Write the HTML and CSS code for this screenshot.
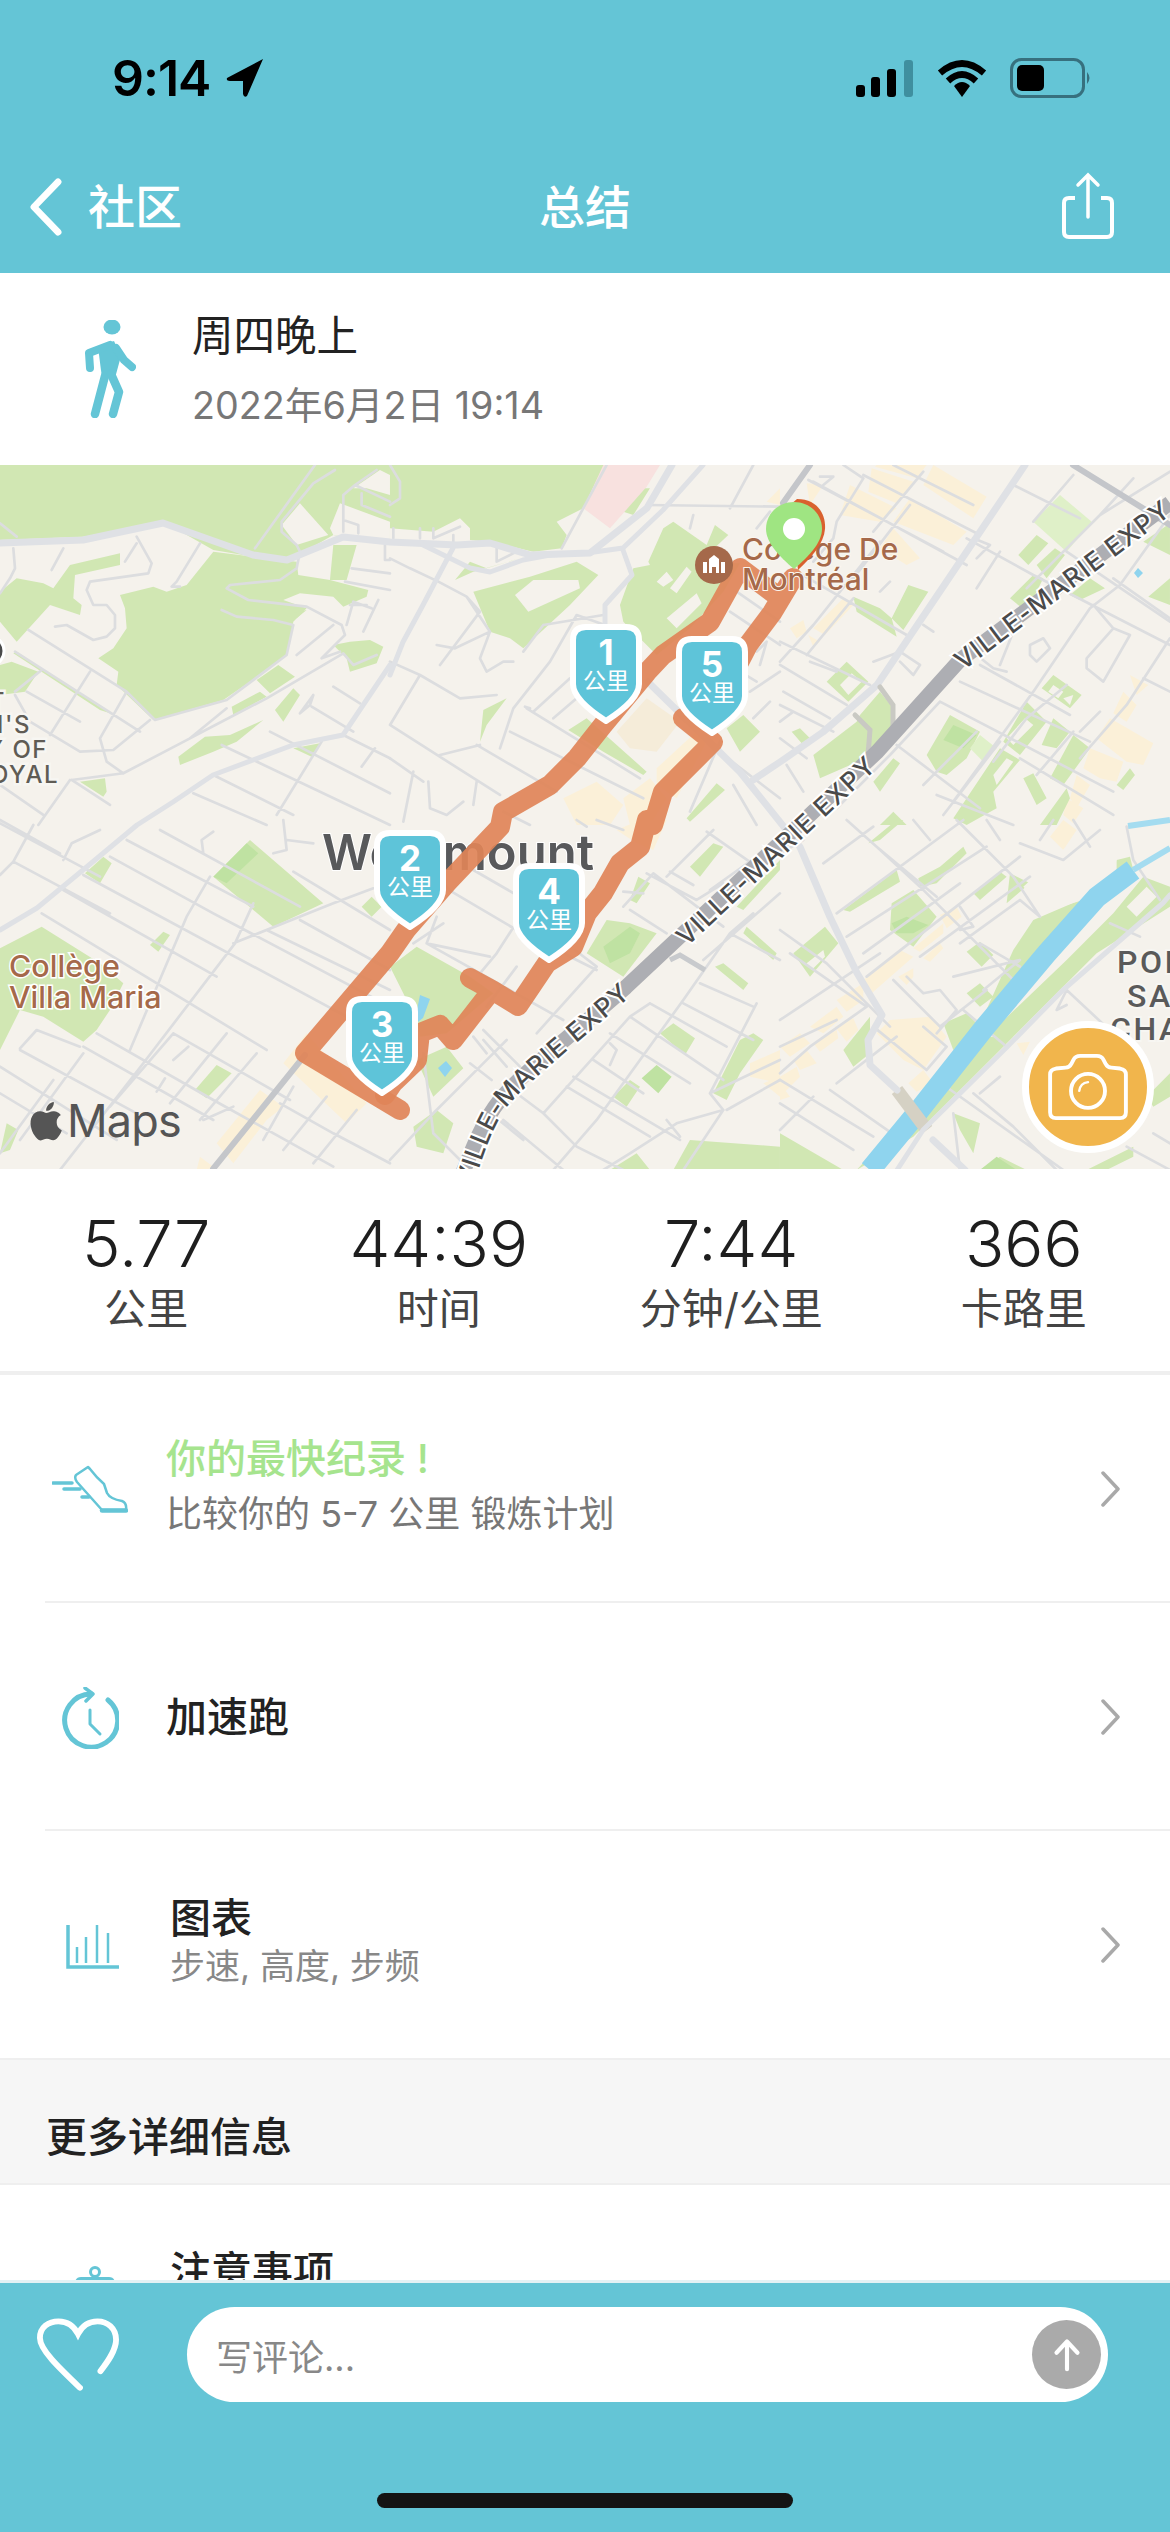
FILE: index.html
```html
<!DOCTYPE html>
<html lang="zh">
<head>
<meta charset="utf-8">
<title>总结</title>
<link rel="stylesheet" href="styles.css">
</head>
<body>
<div class="page">
  <header class="top">
    <div class="status">
      <div class="status-left">
        <span class="clock">9:14</span>
        <svg class="loc" viewBox="0 0 38 40"><path d="M37 1 L1 20 Q0 23 4 23 L17 23 L17 36 Q18 40 21 38 Z" fill="#000"/></svg>
      </div>
      <div class="status-right">
        <svg class="signal" viewBox="0 0 58 37"><rect x="0" y="25" width="9" height="12" rx="3" fill="#000"/><rect x="15" y="17" width="9" height="20" rx="3" fill="#000"/><rect x="31" y="9" width="9" height="28" rx="3" fill="#000"/><rect x="48" y="0" width="9" height="37" rx="3" fill="#3f8f9f"/></svg>
        <svg class="wifi" viewBox="0 0 50 37"><path d="M3 13 Q25 -6 47 13" fill="none" stroke="#000" stroke-width="6.5"/><path d="M11 21 Q25 8 39 21" fill="none" stroke="#000" stroke-width="6.5"/><path d="M17 26 Q25 18 33 26 L25 37 Z" fill="#000"/></svg>
        <svg class="battery" viewBox="0 0 84 40"><rect x="1.5" y="1.5" width="72" height="37" rx="10" fill="none" stroke="#37707e" stroke-width="3"/><rect x="7" y="7" width="27" height="26" rx="5" fill="#000"/><path d="M77 14 Q82 20 77 26 Z" fill="#37707e"/></svg>
      </div>
    </div>
    <nav class="nav">
      <div class="back">
        <svg class="back-icon" viewBox="0 0 36 60"><path d="M31 4 L6 30 L31 56" fill="none" stroke="#fff" stroke-width="7" stroke-linecap="round" stroke-linejoin="round"/></svg>
        <span>社区</span>
      </div>
      <div class="nav-title">总结</div>
      <svg class="share" viewBox="0 0 54 68"><path d="M14 26 H8 Q3 26 3 31 V60 Q3 65 8 65 H46 Q51 65 51 60 V31 Q51 26 46 26 H40" fill="none" stroke="#fff" stroke-width="4"/><path d="M27 45 V3 M17 13 L27 3 L37 13" fill="none" stroke="#fff" stroke-width="3.5" stroke-linecap="round"/></svg>
    </nav>
  </header>

  <main class="scroll">
    <section class="activity">
      <svg class="walker" viewBox="0 0 52 98"><ellipse cx="28" cy="7" rx="8.5" ry="7.5" fill="#64c5d6"/><path d="M14 27 L30 21 L37 36 L31 58 L18 58 Z" fill="#64c5d6"/><g fill="none" stroke="#64c5d6" stroke-linecap="round" stroke-linejoin="round"><path d="M26 25 L5 33 L6 48" stroke-width="8"/><path d="M32 28 L40 40 L48 47" stroke-width="8"/><path d="M21 56 L11 94" stroke-width="8.5"/><path d="M27 54 L35 72 L29 94" stroke-width="8.5"/></g></svg>
      <div class="activity-text">
        <div class="activity-title">周四晚上</div>
        <div class="activity-date">2022年6月2日 19:14</div>
      </div>
    </section>

    <section class="map">
      <svg class="map-art" viewBox="0 0 1170 704">
        <rect class="m-base" width="1170" height="704"/>

        <!-- commercial areas -->
        <g class="m-tan">
          <g transform="translate(390,0) scale(.3333)"><path class="m-tan-soft" d="M680,800 770,700 870,770 800,860 720,850Z"/><path d="M800,910 930,790 950,830 860,1000 800,960Z M520,1000 620,950 700,1020 660,1080 560,1080Z M700,1000 780,940 830,1000 780,1080 720,1080Z M1130,110 1170,70 1170,120Z"/></g>
          <g transform="translate(780,0) scale(.3333)"><path d="M275,10 400,50 350,115 265,80Z M290,0 440,0 410,40 285,5Z M460,0 620,95 580,160 430,60Z M390,100 560,200 520,240 340,170Z M80,55 130,60 90,120Z M210,60 350,130 300,170 180,150Z M340,190 420,280 380,300 300,250Z M30,490 70,465 80,500 50,520Z M100,490 190,400 220,420 135,510Z M85,510 120,530 100,545Z M1050,630 1105,660 1070,690Z M1030,680 1070,720 1040,770 1000,745Z M990,760 1120,835 1090,900 1040,890 950,820Z M930,850 1030,890 1010,950 960,940 910,910Z M890,930 930,960 890,1030 870,1000Z M860,1000 910,1030 880,1075 850,1050Z"/></g>
          <g transform="translate(0,355) scale(.3333)"><path d="M650,970 780,810 850,860 800,900 700,1030Z M850,730 920,640 1100,850 1040,910Z M600,1010 640,1040 620,1050 590,1050Z"/></g>
          <g transform="translate(390,355) scale(.3333)"><path d="M1080,730 1170,690 1170,790 1080,770Z M1120,790 1170,770 1170,830Z M600,0 640,0 620,15Z M680,30 750,0 830,0 790,90 740,70Z"/></g>
          <g transform="translate(780,355) scale(.3333)"><path d="M810,50 850,0 890,30 850,90Z M480,285 530,260 545,290 500,325Z M400,385 490,310 490,340 420,395Z M430,415 480,370 490,385 450,425Z M250,480 360,390 400,410 275,520Z M170,540 250,490 250,540 200,575Z M355,470 400,445 400,470 380,495Z M90,620 170,560 190,590 130,640Z M165,620 220,595 235,630 200,665Z M0,680 60,640 90,670 30,710Z M100,670 170,630 175,655 120,695Z M40,720 80,690 110,730 60,750Z M0,770 50,740 60,770 0,830Z M0,790 30,830 0,840Z M290,640 330,600 450,590 500,650 430,750 370,720Z M385,790 430,750 460,790 410,815Z M710,670 750,665 730,705Z"/></g>
        </g>

        <!-- parks -->
        <g class="m-green">
          <g transform="scale(.3333)">
            <path d="M0,0 1170,0 1170,240 1000,210 860,290 760,275 640,255 490,170 250,215 0,225Z"/>
            <path d="M360,390 460,365 500,380 560,360 640,260 760,275 890,290 895,330 990,345 1105,375 1100,395 1030,425 1000,395 900,385 850,405 920,430 880,470 860,570 830,595 670,705 460,765 350,660 355,620 295,580 340,550 380,490 375,430Z"/>
            <path d="M0,380 50,340 130,355 160,370 210,300 360,265 360,300 225,330 220,400 245,420 240,450 150,420 50,530 0,470Z"/>
            <path d="M0,600 35,590 115,620 75,680 0,690Z M770,645 835,600 885,635 810,685Z M695,725 780,680 800,695 700,750Z M825,735 880,670 900,690 850,770Z M535,875 615,815 690,810 790,765 710,830 640,860 540,900Z M240,950 315,940 320,980 310,995Z M880,850 960,835 935,875Z M1000,540 1050,530 1110,525 1150,545 1130,595 1050,620 1040,580Z M40,565 50,560 330,745 300,735Z M850,450 920,435 890,460Z"/>
            <path class="m-clear" d="M900,115 985,210 890,240 845,180Z M1020,115 1170,170 1170,240 1000,210 990,190Z M1060,70 1140,15 1170,30 1170,90 1100,70Z M920,310 985,340 1000,240 1070,240 1040,345 1170,360 1170,240 920,270Z"/>
            <path d="M1000,240 1070,240 1040,345 990,345Z"/>
          </g>
          <g transform="translate(390,0) scale(.3333)">
            <path d="M0,0 650,0 580,130 500,170 530,210 515,250 430,260 300,230 240,225 240,190 210,160 130,200 0,190Z"/>
            <path d="M250,380 420,335 560,290 625,330 540,420 400,550 360,520 300,500Z"/>
            <path class="m-clear" d="M375,390 430,345 500,345 565,345 570,370 415,440Z"/>
            <path d="M700,470 690,420 730,310 780,300 775,290 820,190 850,170 950,240 975,180 1015,210 930,290 1050,295 1000,380 900,490 800,570Z"/>
            <path class="m-clear" d="M800,350 830,320 850,345 820,365Z M840,370 890,305 905,320 860,385Z M830,460 920,385 935,415 860,490Z"/>
            <path d="M195,345 240,290 290,310 390,280 250,320Z M535,795 590,760 770,920 760,930 640,860Z M890,1060 980,955 1005,975 900,1070Z M1010,790 1060,750 1110,800 1050,860Z M270,830 280,735 350,700 290,780Z M740,70 780,70 730,150 700,140Z"/>
            <path class="m-pink" d="M640,0 810,0 770,65 660,190 580,130Z"/>
          </g>
          <g transform="translate(780,0) scale(.3333)">
            <path d="M220,395 300,430 335,460 350,515 230,440Z M335,460 385,360 445,380 370,495Z M140,650 200,590 265,650 205,710Z"/>
            <path class="m-clear" d="M180,660 215,625 245,650 205,690Z"/>
            <path class="m-green-pale" d="M760,170 840,90 935,170 860,260Z"/>
            <path d="M715,270 770,210 805,235 745,300Z M770,300 825,250 855,270 800,340Z M870,390 930,340 975,370 900,405Z M1090,230 1170,175 1170,270Z M1105,395 1170,340 1170,420Z M100,870 230,770 240,750 300,680 340,730 340,790 280,870 120,940Z M35,800 60,790 90,820 65,835Z M440,870 510,750 600,800 560,880 500,930 470,920Z M670,830 740,710 800,770 720,870Z M785,840 820,760 870,800 830,850Z M785,670 820,630 905,690 870,730Z M810,940 880,810 930,850 850,960Z M520,1060 660,850 720,885 640,980 650,1030 560,1080Z M730,940 760,925 800,1000 770,1020Z M780,1080 860,970 870,1000 830,1080Z M1010,960 1050,910 1065,930 1030,975Z M280,950 340,880 360,895 300,980Z M300,1080 340,1040 380,1080Z M70,1040 140,970 160,990 100,1060Z M690,400 760,330 790,340 740,440Z"/>
            <path class="m-clear" d="M820,660 850,680 835,700 805,680Z M850,700 880,690 870,720Z M680,820 735,760 760,780 700,840Z M640,930 680,880 700,890 650,960Z"/>
            <path class="m-green-mid" d="M490,825 520,780 590,810 550,850Z"/>
            <path class="m-green-pale" d="M570,850 600,810 650,850 610,890Z"/>
          </g>
          <g transform="translate(0,355) scale(.3333)">
            <path d="M0,385 125,320 300,430 370,490 330,570 290,630 250,665 130,590 60,570 0,690Z M640,170 750,60 970,250 820,320Z M450,375 490,335 510,345 475,395Z M255,160 310,110 335,130 300,190Z M585,810 650,735 695,760 620,835Z M1085,260 1115,230 1145,260 1115,290Z M0,1000 20,910 55,930 30,990Z"/>
            <path class="m-green-mid" d="M640,170 740,70 775,100 680,190Z"/>
          </g>
          <g transform="translate(390,355) scale(.3333)">
            <path d="M0,440 80,380 240,470 310,520 170,640 90,650 80,600Z M80,720 170,680 220,745 130,830Z M70,920 140,870 190,910 160,1000 80,980Z M590,400 650,300 720,310 800,340 700,470Z M900,140 970,70 1000,80 930,170Z M975,440 1000,430 1075,490 1060,510Z M810,640 850,610 915,655 885,705Z M670,830 720,780 750,800 710,860Z M970,820 1050,660 1090,640 1120,660 1050,760 1010,840Z M850,1050 900,960 1170,980 1170,1050Z M1040,260 1170,120 1170,150 1060,270Z M1070,320 1160,400 1150,420 1060,340Z M720,240 745,170 780,190 740,250Z M660,1050 740,1000 780,1050Z"/>
            <path class="m-green-mid" d="M640,380 720,320 750,340 720,400 660,430Z M755,775 800,735 845,770 805,820Z"/>
          </g>
          <g transform="translate(780,355) scale(.3333)">
            <path d="M610,590 700,390 760,300 900,240 1010,150 1060,140 910,320 620,610Z M630,640 860,420 1000,280 1090,170 1170,200 1170,260 950,400 680,670Z M230,1050 470,790 560,650 700,650 400,950Z M490,610 560,580 600,620 520,690Z M190,270 350,150 360,185 210,275Z M415,175 480,140 550,80 560,100 470,190 420,200Z M580,220 660,155 680,170 600,240Z M690,160 750,190 680,250Z M265,70 350,0 370,0 300,60Z M335,250 400,210 470,290 400,380 330,330Z M560,395 600,365 640,405 605,440Z M560,520 600,490 640,530 600,560Z M40,400 135,320 175,370 90,470Z M190,690 270,590 270,700 220,740Z M0,940 190,1050 0,1050Z M600,1050 660,1010 740,1050Z M520,880 600,910 580,1000 540,930Z M1010,120 1050,110 1060,150 1010,170Z M1100,830 1170,760 1170,830 1120,860Z M920,1050 1060,980 1060,1010 980,1050Z"/>
            <path class="m-clear" d="M810,270 910,240 1000,150 1030,60 960,30 860,80 730,200Z M80,430 130,390 135,410 95,450Z M1040,260 1100,200 1130,230 1070,290Z"/>
            <path class="m-green-mid" d="M335,310 380,290 445,315 400,340 350,340Z M600,1050 650,1010 710,1050Z"/>
          </g>
        </g>

        <!-- minor streets -->
        <g class="m-street">
          <g transform="scale(.3333)"><path d="M765,250 945,0 M1005,15 940,55 845,170 845,200 890,240 900,260 890,310 840,345 690,360 680,370 745,405 920,425 1025,480 1035,510 965,580 1020,560 M665,435 710,455 820,465 880,480 860,570 680,705 465,765 380,680 85,495 M1065,60 1130,15 M1030,90 1065,60 1170,110 M1030,90 1030,200 M1030,165 1075,180 1075,205 M1085,85 1085,120 1170,155 M1055,310 1170,325 M1035,350 1170,375 M1155,240 1155,285 1170,285 M600,235 530,350 515,365 540,365 M410,215 455,295 445,325 270,350 260,375 280,420 320,420 345,450 345,490 320,515 280,525 200,480 165,485 M410,235 375,290 M190,250 155,315 M40,250 45,310 30,340 0,385 M0,175 50,215 M45,560 420,800 M125,615 45,680 M270,620 150,810 M380,680 300,820 320,890 370,925 570,820 680,730 M80,680 240,770 M240,860 340,855 450,765 M45,690 90,770 240,860 M370,925 215,945 M215,945 330,1020 M210,945 115,1080 M570,820 800,700 1030,565 1060,600 1130,570 M665,840 1170,1080 M810,800 1170,985 M890,570 1000,480 M1090,500 1135,405 M1000,665 1080,715 M935,725 1060,800 M1085,905 1125,850 M965,830 830,1050 M0,960 130,1050 M580,985 800,1080 M640,930 880,1050 M1030,810 1170,880 M900,745 940,690 930,720 900,745 M1040,480 1060,410 1115,430 M1050,420 1100,420"/></g>
          <g transform="translate(390,0) scale(.3333)"><path d="M0,280 60,310 145,350 230,395 300,500 270,580 290,620 340,590 370,590 M230,395 270,440 150,600 M0,590 90,630 210,700 320,690 M90,630 0,780 M140,540 195,550 300,500 M460,480 640,450 M400,560 460,480 M330,850 370,730 480,590 560,450 645,480 M0,780 330,990 M360,800 760,1000 M260,840 500,980 M410,730 750,940 M0,880 100,950 M150,870 270,840 M430,740 540,640 M490,760 560,700 M70,920 40,1070 M115,950 120,1030 170,1050 220,1010 M515,250 650,0 M770,120 1170,125 M1020,130 1090,0 M900,190 910,150 M1100,190 1140,140 M0,0 30,50 30,100 0,120 M190,240 190,210 M320,250 320,290 380,260 M90,190 90,220 M130,190 130,220 210,185 M10,190 10,220 M1040,380 1170,470 M1020,440 1170,540 M1100,560 1130,530 1110,600 M1000,590 1100,650 M1080,680 1170,620 M1090,760 1140,710 M1000,870 1170,1000 M1030,960 1100,1080 M990,830 900,1040 M420,1080 340,1040 M260,950 250,1020 M420,730 405,725"/></g>
          <g transform="translate(780,0) scale(.3333)"><path d="M250,30 600,210 M190,0 250,40 M100,50 560,300 M340,0 580,120 M85,45 490,260 M50,320 380,510 M0,530 270,660 M0,600 200,720 M0,720 160,800 M250,40 170,170 160,220 M430,20 280,200 M390,120 220,340 M160,220 100,290 M300,230 100,480 0,590 M220,400 80,570 M560,220 760,330 1170,540 M700,60 900,160 M860,260 1170,470 M960,150 1170,20 M760,170 880,30 M1060,40 960,150 740,370 M940,420 1000,490 1050,510 970,650 920,610 920,580 1000,490 M1170,150 1020,360 930,430 760,680 520,1010 M1000,340 1170,460 M480,710 1000,980 M540,650 930,830 M700,500 660,600 M1170,520 1040,720 900,880 M750,540 790,520 810,550 770,590 750,570Z M590,570 640,610 680,620 M600,600 870,750 M480,710 330,870 170,1030 M350,840 600,1030 M590,800 430,960 M660,830 490,1050 M770,930 880,800 M860,660 740,760 640,890 M0,820 80,880 M20,900 70,980 M470,990 700,1080 M720,880 1000,1050 M960,740 900,800 M580,220 630,240 590,280 M660,260 590,370 M300,380 330,350 M280,590 360,560 420,600 400,630 360,590 M90,590 170,620 M10,680 150,760 M0,770 40,740 M430,480 460,500 M120,35 160,35 130,60 M1090,640 1170,680"/></g>
          <g transform="translate(0,355) scale(.3333)"><path d="M0,10 300,170 M100,15 40,125 0,165 M190,120 215,70 300,30 M40,125 330,280 M125,280 800,690 M190,210 650,470 M250,165 1170,660 M330,110 640,280 1170,560 M380,60 760,260 M480,30 900,260 M610,100 605,60 640,35 M630,170 560,290 390,690 M760,250 705,370 430,730 180,1050 M700,370 1000,250 1120,205 M880,155 1170,330 M900,300 1170,450 M800,330 1170,510 M520,640 870,840 M60,685 110,630 240,680 M60,690 410,880 M250,680 640,900 M0,740 350,960 M290,640 640,840 1000,1040 M520,640 330,860 M680,640 510,850 M770,700 600,900 M520,720 565,680 M470,815 495,775 M700,860 610,900 M840,850 1000,940 1170,1030 M880,800 790,960 M980,830 850,990 M1070,870 940,1030 M0,820 200,940 M250,700 60,960 M160,780 0,1000 M850,0 860,90 820,100 M860,60 940,70 M0,0 180,100"/></g>
          <g transform="translate(390,355) scale(.3333)"><path d="M185,215 380,330 620,450 M250,150 380,225 M140,290 110,370 300,410 M160,310 70,370 M110,370 520,600 M320,400 270,460 M380,440 290,560 M365,330 320,400 M280,630 390,740 M555,390 620,440 440,640 M280,660 350,740 M240,730 305,780 M780,550 720,590 460,880 560,980 700,1050 M720,590 1000,780 M660,640 900,790 M610,720 760,820 M550,770 870,960 M530,800 780,950 M780,550 1010,680 M880,550 1090,660 M930,490 1090,560 M1020,340 1170,420 M1090,280 1020,340 880,540 620,900 490,1050 M660,670 680,690 660,735 M1170,220 940,420 M1100,550 960,820 1000,870 M1000,870 860,910 720,1000 640,1050 M1000,870 880,1050 M460,880 340,790 M830,900 870,950 M960,820 1170,720 M1010,870 1170,780 M590,20 560,0 M620,0 700,30 M700,260 790,160 1000,320 M720,270 830,340 M770,160 920,240 1000,190 M840,155 910,195 M950,35 1100,140 M970,30 830,170 M700,215 760,220 M1170,60 960,210 M250,650 290,700 M100,700 130,940 240,1050 M0,1020 130,880 270,740 350,660 M290,870 400,960 M340,900 520,1050 M0,40 185,215"/></g>
          <g transform="translate(780,355) scale(.3333)"><path d="M0,100 70,60 M0,330 140,430 330,620 M30,400 260,560 M290,80 470,230 M200,0 290,80 420,200 720,500 M130,130 280,20 M170,280 550,0 M200,350 620,80 M250,400 540,190 M260,470 720,110 M420,410 750,170 M0,600 300,400 M0,680 170,600 M0,760 90,680 260,560 M170,790 350,650 M100,830 0,930 M150,810 350,950 M0,780 280,950 M0,850 220,990 M430,620 500,680 440,750 280,620 M340,480 480,620 M480,620 620,510 M380,470 430,520 480,510 530,570 470,640 M550,570 680,680 M520,470 720,420 610,510 M600,370 720,440 M780,290 720,240 540,370 M540,260 580,320 540,330 M1040,20 1060,120 1140,240 M720,70 850,120 960,30 M820,0 780,60 M990,310 1080,350 M860,510 1010,650 M860,510 830,570 860,555 M540,1050 520,880 M580,820 700,920 830,1050 M660,770 600,820 M470,780 850,1050 M1040,980 1170,1050 M1120,940 1170,970 M530,0 700,170 780,290 M400,0 450,60 M620,0 660,60 M880,0 930,80"/></g>
        </g>

        <!-- water -->
        <g class="m-water">
          <polyline class="m-river" points="870,705 917,648 985,562 1047,488 1097,432 1133,405"/>
          <polyline class="m-canal" points="1133,405 1170,383"/>
          <polyline class="m-canal" points="1128,361 1170,355"/>
          <path class="m-pond" d="M420,530 430,534 423,553 414,560Z M438,603 446,596 452,603 445,612Z M1134,108 1138,103 1143,108 1138,113Z"/>
          <line class="m-bridge" x1="897" y1="625" x2="927" y2="665"/>
        </g>

        <!-- main roads -->
        <g class="m-road">
          <polyline class="wide" points="0,78 83,75 163,58 253,90 287,95 343,72 390,77 457,80 490,78 530,90 590,88 647,43 672,0"/>
          <polyline points="423,80 470,103 490,107 523,95 550,90 587,88 623,83 663,45 703,0"/>
          <polyline points="0,465 37,443 83,405 137,360 173,337 213,310 293,280 343,270 390,200"/>
          <polyline points="453,83 423,140 403,177 390,210"/>
          <polyline points="623,85 632,110 605,140 605,160"/>
          <polyline class="wide" points="1025,0 877,220 823,267 780,297 753,315"/>
          <polyline class="wide" points="648,217 740,307 800,382 830,452 857,508 882,550 868,575 870,600 897,625"/>
          <polyline points="897,705 923,665 1007,582 1063,525 1163,438 1170,430"/>
          <polyline class="wide" points="933,675 965,705"/>
        </g>
        <g class="m-road-dark">
          <polyline points="1073,0 1170,60"/>
          <polyline points="305,590 213,704"/>
          <polyline points="810,0 783,38"/>
          <polyline class="thin" points="880,222 893,240 893,268 880,285"/>
          <polyline class="thin" points="855,250 870,265 868,290"/>
        </g>

        <!-- expressway -->
        <path class="m-highway" d="M450,740 C470,690 480,660 500,635 C520,610 560,580 626,522 L877,287 L960,195 L1170,38"/>
        <path class="m-road-dark-path" d="M670,495 680,490 705,505"/>
        <path id="hwA" class="m-none" d="M445,775 C470,700 480,660 500,635 C520,610 560,580 626,522"/>
        <path id="hwB" class="m-none" d="M680,475 L880,287"/>
        <path id="hwC" class="m-none" d="M957,198 L1170,38"/>
        <text class="m-hw-text"><textPath href="#hwA" startOffset="100%" text-anchor="end">VILLE-MARIE EXPY</textPath></text>
        <text class="m-hw-text"><textPath href="#hwB">VILLE-MARIE EXPY</textPath></text>
        <text class="m-hw-text"><textPath href="#hwC">VILLE-MARIE EXPY</textPath></text>

        <circle class="m-cut" cx="-11" cy="186" r="15"/>
        <g class="m-area">
          <text x="6" y="245" text-anchor="end">T</text>
          <text x="31" y="268" text-anchor="end">H'S</text>
          <text x="48" y="293" text-anchor="end">Y OF</text>
          <text x="59" y="318" text-anchor="end">OYAL</text>
        </g>
        <g class="m-area-big">
          <text x="1117" y="508">POIN</text>
          <text x="1127" y="542">SAI</text>
          <text x="1110" y="575">CHA</text>
        </g>
        <text class="m-city" x="322" y="405">Westmount</text>
        <text class="m-poi-small" x="9" y="512">Collège</text>
        <text class="m-poi-small" x="9" y="543">Villa Maria</text>

        <!-- route -->
        <g class="m-route">
          <polyline points="400,645 305,588 390,488 406,465 447,418 500,362 503,347 550,320 577,293 603,260 647,207 663,190 710,157 740,103 780,133 793,113 772,148 748,180 730,215"/>
          <polyline points="683,253 713,277 663,327 653,360 647,355 640,382 620,398 603,428 587,448 573,482 547,498 518,541 492,525 470,513 492,525 453,575 440,560 420,568 417,595 393,618 385,630"/>
        </g>

        <g class="m-poi">
          <text x="742" y="95">Collège De</text>
          <text x="742" y="125">Montréal</text>
        </g>
        <circle class="m-poi-dot" cx="714" cy="100" r="19"/>
        <path class="m-poi-ico" d="M703 108 V97 H707 V108 Z M721 108 V97 H725 V108 Z M709 108 V94 L714 90 L719 94 V108 H716 V102 H712 V108 Z"/>

        <path class="m-logo" transform="translate(27,637) scale(1.6)" d="M12.152 6.896c-.948 0-2.415-1.078-3.96-1.04-2.04.027-3.91 1.183-4.961 3.014-2.117 3.675-.546 9.103 1.519 12.09 1.013 1.454 2.208 3.09 3.792 3.039 1.52-.065 2.09-.987 3.935-.987 1.831 0 2.35.987 3.96.948 1.637-.026 2.676-1.48 3.676-2.948 1.156-1.688 1.636-3.325 1.662-3.415-.039-.013-3.182-1.221-3.22-4.857-.026-3.04 2.48-4.494 2.597-4.559-1.429-2.09-3.623-2.324-4.39-2.376-2-.156-3.675 1.09-4.61 1.09zM15.53 3.83c.843-1.012 1.4-2.427 1.245-3.83-1.207.052-2.662.805-3.532 1.818-.78.896-1.454 2.338-1.273 3.714 1.338.104 2.715-.688 3.559-1.701"/>
        <text class="m-maps" x="67" y="672">Maps</text>

        <path class="m-pin-back" d="M797 34 C818 34 826 50 825 64 C824 78 812 92 798 105 L790 40 Z"/>
        <path class="m-pin" d="M794 37 C778 37 766 49 766 64 C766 78 780 92 794 104 C808 92 822 78 822 64 C822 49 810 37 794 37 Z"/>
        <circle class="m-pin-dot" cx="794" cy="64" r="11"/>
      </svg>
      <div class="pin pin-1"><svg class="shield" viewBox="0 0 72 101"><path d="M16 3 H56 Q69 3 69 16 V60 C69 74 50 88 36 97 C22 88 3 74 3 60 V16 Q3 3 16 3 Z"/></svg><div class="pin-text"><b>1</b><span>公里</span></div></div>
      <div class="pin pin-5"><svg class="shield" viewBox="0 0 72 101"><path d="M16 3 H56 Q69 3 69 16 V60 C69 74 50 88 36 97 C22 88 3 74 3 60 V16 Q3 3 16 3 Z"/></svg><div class="pin-text"><b>5</b><span>公里</span></div></div>
      <div class="pin pin-2"><svg class="shield" viewBox="0 0 72 101"><path d="M16 3 H56 Q69 3 69 16 V60 C69 74 50 88 36 97 C22 88 3 74 3 60 V16 Q3 3 16 3 Z"/></svg><div class="pin-text"><b>2</b><span>公里</span></div></div>
      <div class="pin pin-4"><svg class="shield" viewBox="0 0 72 101"><path d="M16 3 H56 Q69 3 69 16 V60 C69 74 50 88 36 97 C22 88 3 74 3 60 V16 Q3 3 16 3 Z"/></svg><div class="pin-text"><b>4</b><span>公里</span></div></div>
      <div class="pin pin-3"><svg class="shield" viewBox="0 0 72 101"><path d="M16 3 H56 Q69 3 69 16 V60 C69 74 50 88 36 97 C22 88 3 74 3 60 V16 Q3 3 16 3 Z"/></svg><div class="pin-text"><b>3</b><span>公里</span></div></div>
      <div class="camera">
        <svg viewBox="0 0 84 70"><path d="M9 16 L19 15 Q23 15 25 11 L27 7 Q29 3 34 3 H51 Q56 3 58 7 L60 11 Q62 15 66 15 L75 16 Q81 17 81 22 V61 Q81 67 75 67 H9 Q3 67 3 61 V22 Q3 17 9 16 Z" fill="none" stroke="#fff" stroke-width="4" stroke-linejoin="round"/><circle cx="42" cy="39" r="17.5" fill="none" stroke="#fff" stroke-width="4"/><path d="M33 39 Q34 31 42 30" fill="none" stroke="#fff" stroke-width="2.5" stroke-linecap="round"/></svg>
      </div>
    </section>

    <section class="stats">
      <div class="stat"><div class="stat-value">5.77</div><div class="stat-label">公里</div></div>
      <div class="stat"><div class="stat-value">44:39</div><div class="stat-label">时间</div></div>
      <div class="stat"><div class="stat-value">7:44</div><div class="stat-label">分钟/公里</div></div>
      <div class="stat"><div class="stat-value">366</div><div class="stat-label">卡路里</div></div>
    </section>

    <section class="list">
      <div class="row">
        <svg class="ico ico-shoe" viewBox="0 0 76 48"><g fill="none" stroke="#64c5d6" stroke-linecap="round" stroke-linejoin="round"><path d="M36 2 L24 10 Q22 13 25 17 L50 45 H74 Q75 38 70 36 Q58 34 55 28 L52 19 Q44 12 38 4 Z" stroke-width="2.5"/><path d="M50 45.5 H74" stroke-width="4.5"/><path d="M1 18 H20 M12 24 H28 M30 32 H37" stroke-width="3.5"/></g></svg>
        <div class="row-text text-first">
          <div class="row-title title-green">你的最快纪录 !</div>
          <div class="row-sub">比较你的 5-7 公里 锻炼计划</div>
        </div>
        <svg class="chev" viewBox="0 0 20 36"><path d="M2 2 L17 18 L2 34" fill="none" stroke="#a9a9a9" stroke-width="3.5" stroke-linecap="round" stroke-linejoin="round"/></svg>
      </div>
      <div class="row">
        <svg class="ico ico-clock" viewBox="0 0 58 62"><path d="M30 7 A26.5 26.5 0 1 0 47 13" fill="none" stroke="#64c5d6" stroke-width="5" stroke-linecap="round"/><path d="M24 1 L32 7 L25 14" fill="none" stroke="#64c5d6" stroke-width="3.5" stroke-linecap="round" stroke-linejoin="round"/><path d="M29 23 V37 L39 47" fill="none" stroke="#64c5d6" stroke-width="3" stroke-linecap="round" stroke-linejoin="round"/></svg>
        <div class="row-text"><div class="row-title title-strong">加速跑</div></div>
        <svg class="chev" viewBox="0 0 20 36"><path d="M2 2 L17 18 L2 34" fill="none" stroke="#a9a9a9" stroke-width="3.5" stroke-linecap="round" stroke-linejoin="round"/></svg>
      </div>
      <div class="row row-last">
        <svg class="ico ico-chart" viewBox="0 0 54 44"><path d="M2 0 V42 H53" fill="none" stroke="#64c5d6" stroke-width="3.5"/><path d="M11 22 V38 M20 12 V38 M31 0 V38 M42 8 V38" fill="none" stroke="#64c5d6" stroke-width="2.5"/></svg>
        <div class="row-text text-graph">
          <div class="row-title title-strong">图表</div>
          <div class="row-sub sub-light">步速, 高度, 步频</div>
        </div>
        <svg class="chev" viewBox="0 0 20 36"><path d="M2 2 L17 18 L2 34" fill="none" stroke="#a9a9a9" stroke-width="3.5" stroke-linecap="round" stroke-linejoin="round"/></svg>
      </div>
    </section>

    <h2 class="more">更多详细信息</h2>

    <section class="list">
      <div class="row row-notes">
        <svg class="ico ico-clip" viewBox="0 0 44 40"><circle cx="22" cy="6" r="4.5" fill="none" stroke="#64c5d6" stroke-width="3"/><path d="M2 18 Q2 11 8 11 H36 Q42 11 42 18 V40 H2 Z" fill="#64c5d6"/></svg>
        <div class="row-text text-notes"><div class="row-title title-strong">注意事项</div></div>
      </div>
    </section>
  </main>

  <footer class="bottom">
    <div class="compose">
      <svg class="heart" viewBox="0 0 84 74"><path d="M44 71 C22 50 3 32 3 20 C3 9 12 3 22 3 C31 3 38 8 42 16 C46 8 53 3 62 3 C72 3 81 10 81 22 C81 33 72 45 65 54" fill="none" stroke="#fff" stroke-width="6" stroke-linecap="round"/></svg>
      <div class="input">
        <span class="placeholder">写评论...</span>
        <div class="send"><svg viewBox="0 0 40 44"><path d="M20 41 V4 M6 19 L20 4 L34 19" fill="none" stroke="#fff" stroke-width="5.5" stroke-linecap="round" stroke-linejoin="round"/></svg></div>
      </div>
    </div>
    <div class="home"></div>
  </footer>
</div>
</body>
</html>
```

FILE: styles.css
```css
* { box-sizing: border-box; }
html, body { margin: 0; padding: 0; }
body { font-family: Inter, "Noto Sans CJK SC", sans-serif; background: #fff; color: #222; }
svg { display: block; flex: none; }

.page { width: 1170px; height: 2532px; display: flex; flex-direction: column; overflow: hidden; }

/* header */
.top { height: 273px; flex: none; background: #64c5d6; display: flex; flex-direction: column; }
.status { height: 172px; padding: 59px 76px 0 112px; display: flex; justify-content: space-between; align-items: flex-start; }
.status-left { display: flex; align-items: center; gap: 16px; height: 38px; }
.clock { font-size: 50px; font-weight: 600; color: #000; line-height: 38px; letter-spacing: -1px; }
.loc { width: 38px; height: 40px; }
.status-right { display: flex; align-items: center; height: 38px; }
.signal { width: 58px; height: 37px; margin-right: 23px; }
.wifi { width: 50px; height: 37px; margin-right: 23px; }
.battery { width: 84px; height: 40px; }
.nav { position: relative; height: 101px; padding: 0 55px 0 28px; display: flex; justify-content: space-between; align-items: flex-start; color: #fff; }
.back { display: flex; align-items: center; gap: 25px; font-size: 47px; font-weight: 500; line-height: 58px; height: 58px; margin-top: 6px; }
.back-icon { width: 35px; height: 58px; }
.nav-title { position: absolute; left: 0; right: 0; top: 6px; text-align: center; font-size: 46px; font-weight: 500; line-height: 58px; }
.share { width: 54px; height: 68px; }

/* activity */
.activity { height: 192px; flex: none; padding: 47px 0 0 84px; display: flex; }
.walker { width: 52px; height: 98px; }
.activity-text { margin-left: 56px; margin-top: -12px; }
.activity-title { font-size: 41.5px; line-height: 56px; color: #222; }
.activity-date { font-size: 37.7px; line-height: 50px; margin-top: 16px; color: #777; }

/* map */
.map { position: relative; height: 704px; flex: none; overflow: hidden; }
.map-art { width: 1170px; height: 704px; }
.m-base { fill: #f5f2ec; }
.m-tan path { fill: #fbf0d8; }
.m-tan .m-tan-soft { fill: #f5ecd9; }
.m-green path { fill: #d1e7b3; }
.m-green .m-clear { fill: #f5f2ec; }
.m-green .m-pink { fill: #f8e1df; }
.m-green .m-green-pale { fill: #dff0c8; }
.m-green .m-green-mid { fill: #bfe2a2; }
.m-street path { fill: none; stroke: #dcdddf; stroke-width: 8; stroke-linejoin: round; stroke-linecap: round; }
.m-river { fill: none; stroke: #8fd4ee; stroke-width: 21; }
.m-canal { fill: none; stroke: #a4dcf0; stroke-width: 6; }
.m-pond { fill: #8fd4ee; }
.m-bridge { stroke: #d5d1c4; stroke-width: 13; }
.m-road polyline { fill: none; stroke: #dfe1e5; stroke-width: 5; stroke-linejoin: round; stroke-linecap: round; }
.m-road .wide { stroke-width: 7; }
.m-road-dark polyline { fill: none; stroke: #c4c6ca; stroke-width: 6; stroke-linecap: round; }
.m-road-dark .thin { stroke: #c9c9c3; stroke-width: 5; }
.m-road-dark-path { fill: none; stroke: #c8cacd; stroke-width: 5; }
.m-highway { fill: none; stroke: #adaeb3; stroke-width: 15; }
.m-none { fill: none; stroke: none; }
.m-hw-text { font-family: Inter, sans-serif; font-size: 26px; font-weight: 500; letter-spacing: 1.4px; fill: #4a4a4a; stroke: #fff; stroke-width: 4px; paint-order: stroke; dominant-baseline: central; }
.m-cut { fill: #4a4a4a; stroke: #fff; stroke-width: 3; }
.m-area text { font-family: Inter, sans-serif; font-size: 24px; font-weight: 500; letter-spacing: 1.5px; fill: #5f5c55; stroke: #f7f6f2; stroke-width: 5px; paint-order: stroke; }
.m-area-big text { font-family: Roboto, sans-serif; font-size: 32px; font-weight: 500; letter-spacing: 2.5px; fill: #5a5a5a; stroke: #f7f6f2; stroke-width: 4px; paint-order: stroke; }
.m-city { font-family: Inter, sans-serif; font-size: 49px; font-weight: 600; fill: #58595b; stroke: #fff; stroke-width: 2px; paint-order: stroke; }
.m-poi text { font-family: Inter, sans-serif; font-size: 30px; font-weight: 500; fill: #a5694a; stroke: #fbf7f0; stroke-width: 2px; paint-order: stroke; }
.m-poi-small { font-family: Inter, sans-serif; font-size: 30.5px; font-weight: 500; fill: #a5694a; stroke: #fff; stroke-width: 3px; paint-order: stroke; }
.m-poi-dot { fill: #a5694a; }
.m-poi-ico { fill: #fff; }
.m-route polyline { fill: none; stroke: #e08458; stroke-opacity: .92; stroke-width: 20; stroke-linejoin: round; stroke-linecap: round; }
.m-logo { fill: #555; }
.m-maps { font-family: Inter, sans-serif; font-size: 45px; font-weight: 400; fill: #555; letter-spacing: -0.8px; }
.m-pin-back { fill: #d9612e; }
.m-pin { fill: #9fe582; }
.m-pin-dot { fill: #fff; }

.pin { position: absolute; width: 72px; height: 101px; }
.pin-1 { left: 570px; top: 159px; }
.pin-5 { left: 676px; top: 171px; }
.pin-2 { left: 374px; top: 365px; }
.pin-4 { left: 513px; top: 398px; }
.pin-3 { left: 346px; top: 531px; }
.shield { position: absolute; inset: 0; width: 72px; height: 101px; }
.shield path { fill: #5ec4d9; stroke: #fff; stroke-width: 6; stroke-linejoin: round; }
.pin-text { position: relative; display: flex; flex-direction: column; align-items: center; padding-top: 12px; color: #fff; }
.pin-text b { font-size: 35px; line-height: 32px; font-weight: 700; }
.pin-text span { font-size: 23px; line-height: 26px; margin-top: 0; }

.camera { position: absolute; left: 1022px; top: 556px; width: 132px; height: 132px; border-radius: 50%; background: #f1b54c; border: 7px solid #fff; display: flex; align-items: center; justify-content: center; }
.camera svg { width: 82px; height: 68px; }

/* stats */
.stats { height: 206px; flex: none; display: grid; grid-template-columns: repeat(4, 1fr); border-bottom: 4px solid #efefef; padding-top: 39px; }
.stat { text-align: center; }
.stat-value { font-size: 65px; line-height: 72px; font-weight: 300; color: #1e1e1e; }
.stat-label { font-size: 42px; line-height: 52px; margin-top: 3px; color: #444; font-weight: 400; }

/* list */
.list { flex: none; }
.row { position: relative; height: 228px; padding-left: 166px; padding-right: 49px; display: flex; align-items: center; justify-content: space-between; }
.row::after { content: ""; position: absolute; left: 45px; right: 0; bottom: 0; height: 2px; background: #efefef; }
.row-last { height: 227px; }
.row-last::after, .row-notes::after { display: none; }
.ico { position: absolute; }
.ico-shoe { left: 52px; top: 90px; width: 76px; height: 48px; }
.ico-clock { left: 61px; top: 84px; width: 58px; height: 62px; }
.ico-chart { left: 66px; top: 94px; width: 54px; height: 44px; }
.ico-clip { left: 73px; top: 81px; width: 44px; height: 40px; }
.row-title { font-size: 41px; line-height: 52px; }
.title-green { color: #a6e48e; font-weight: 500; font-size: 40px; }
.title-strong { font-weight: 500; color: #222; }
.row-sub { font-size: 36px; line-height: 44px; color: #777; margin-top: 7px; }
.sub-light { color: #888; font-size: 35px; margin-top: 0; }
.text-first { margin-top: -9px; }
.text-graph { margin-left: 4px; margin-top: -10px; }
.text-notes { margin-left: 4px; }
.row-text { margin-right: auto; }
.chev { width: 20px; height: 36px; }
.more { margin: 0; height: 127px; flex: none; background: #f6f6f6; border-top: 2px solid #efefef; border-bottom: 2px solid #efefef; padding: 49px 0 0 46px; font-size: 41px; line-height: 56px; font-weight: 500; color: #222; }
.row-notes { align-items: flex-start; padding-top: 60px; }

/* scroll & bottom */
.scroll { flex: 1; min-height: 0; overflow: hidden; display: flex; flex-direction: column; }
.bottom { height: 252px; flex: none; background: #64c5d6; border-top: 3px solid #e2f2f5; position: relative; }
.compose { display: flex; align-items: center; padding: 24px 62px 0 37px; }
.heart { width: 82px; height: 73px; }
.input { margin-left: 68px; flex: 1; height: 95px; border-radius: 48px; background: #fff; display: flex; align-items: center; justify-content: space-between; padding: 0 7px 0 29px; }
.placeholder { font-size: 36px; color: #888; }
.send { width: 69px; height: 69px; border-radius: 50%; background: #aaa; display: flex; align-items: center; justify-content: center; }
.send svg { width: 30px; height: 44px; }
.home { position: absolute; left: 377px; top: 210px; width: 416px; height: 15px; border-radius: 8px; background: #141414; }
```
